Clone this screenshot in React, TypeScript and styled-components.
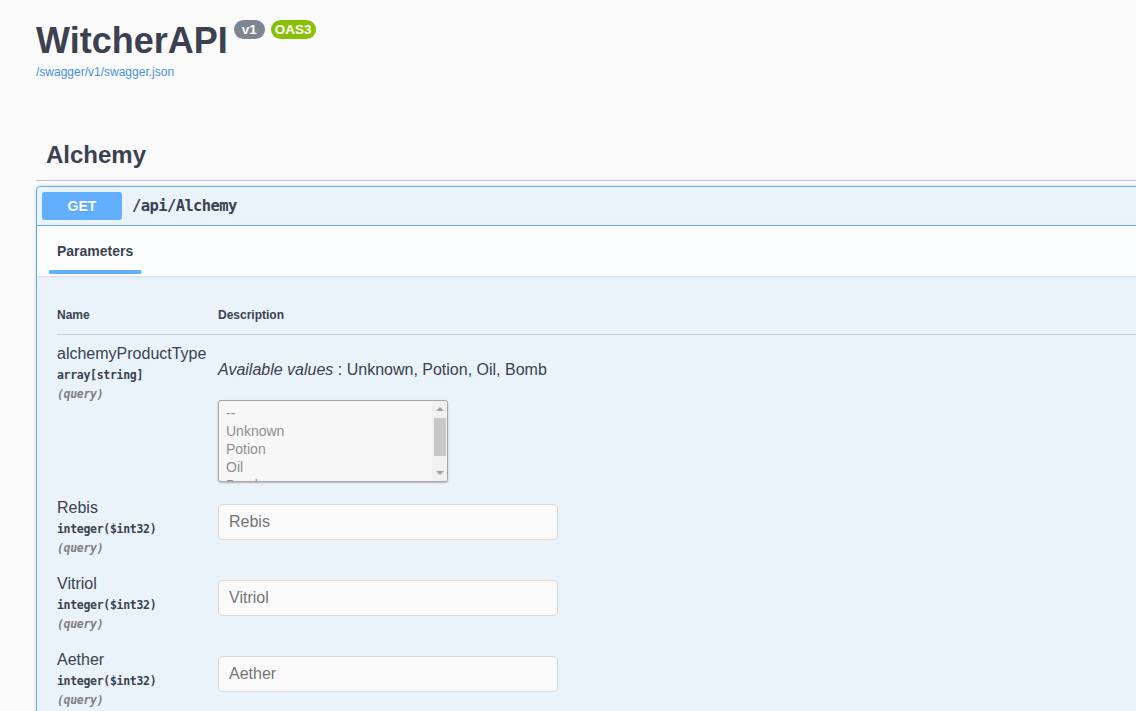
import React from 'react';
import styled, { createGlobalStyle } from 'styled-components';

const GlobalStyle = createGlobalStyle`
  html, body {
    margin: 0;
    padding: 0;
    background: #fafafa;
    overflow: hidden;
  }
  body {
    font-family: "Liberation Sans", Arial, sans-serif;
    color: #3b4151;
  }
  * {
    box-sizing: border-box;
  }
`;

const MONO = '"DejaVu Sans Mono", "Liberation Mono", monospace';

const Wrapper = styled.div`
  width: 1480px;
  padding: 0 20px 0 36px;
`;

const Info = styled.div`
  padding-top: 20px;
`;

const TitleRow = styled.div`
  display: flex;
  align-items: flex-start;
`;

const Title = styled.h2`
  margin: 0;
  font-size: 36px;
  line-height: 42px;
  font-weight: 700;
  color: #3b4151;
`;

const Badge = styled.span<{ $color: string; $pad: number }>`
  margin: 0 0 0 6px;
  height: 19px;
  padding: 0 ${({ $pad }) => $pad}px;
  border-radius: 57px;
  background: ${({ $color }) => $color};
  color: #fff;
  font-size: 13.5px;
  font-weight: 700;
  line-height: 19px;
`;

const SpecLink = styled.a`
  display: inline-block;
  margin-top: 3px;
  font-size: 12px;
  line-height: 14px;
  color: #4990e2;
  text-decoration: none;
`;

const Tag = styled.div`
  margin-top: 51px;
  padding: 10px 20px 11px 10px;
  border-bottom: 1px solid rgba(59, 65, 81, 0.3);
`;

const TagTitle = styled.h3`
  margin: 0;
  font-size: 24px;
  line-height: 28px;
  font-weight: 700;
`;

const OpBlock = styled.div`
  margin-top: 5px;
  border: 1px solid #61affe;
  border-radius: 4px;
  background: rgba(97, 175, 254, 0.1);
  box-shadow: 0 0 3px rgba(0, 0, 0, 0.19);
`;

const Summary = styled.div`
  display: flex;
  align-items: center;
  gap: 10px;
  padding: 5px;
  border-bottom: 1px solid #61affe;
`;

const Method = styled.span`
  min-width: 80px;
  padding: 6px 0;
  border-radius: 3px;
  background: #61affe;
  color: #fff;
  font-size: 14px;
  line-height: 16px;
  font-weight: 700;
  text-align: center;
  text-shadow: 0 1px 0 rgba(0, 0, 0, 0.1);
`;

const Path = styled.span`
  font-family: ${MONO};
  font-size: 15.5px;
  letter-spacing: -0.6px;
  font-weight: 700;
  color: #3b4151;
`;

const SectionHeader = styled.div`
  display: flex;
  align-items: center;
  min-height: 50px;
  padding: 8px 20px;
  background: rgba(255, 255, 255, 0.8);
  box-shadow: 0 1px 2px rgba(0, 0, 0, 0.1);
`;

const TabItem = styled.div`
  position: relative;
  font-size: 14px;
  line-height: 16px;
  font-weight: 700;

  &::after {
    content: '';
    position: absolute;
    left: 50%;
    bottom: -15px;
    width: 120%;
    height: 4px;
    transform: translateX(-50%);
    background: #61affe;
  }
`;

const TableContainer = styled.div`
  padding: 20px 20px 0;
`;

const Row = styled.div`
  display: grid;
  grid-template-columns: 161px 1fr;
`;

const HeadRow = styled(Row)`
  border-bottom: 1px solid rgba(59, 65, 81, 0.2);
`;

const HeadCell = styled.div`
  padding: 12px 0;
  font-size: 12px;
  line-height: 14px;
  font-weight: 700;
`;

const NameCell = styled.div`
  padding: 10px 10px 10px 0;
`;

const ParamName = styled.div`
  font-size: 16px;
  line-height: 18px;
`;

const ParamType = styled.div`
  padding: 5px 0;
  font-family: ${MONO};
  font-size: 11.5px;
  letter-spacing: -0.3px;
  line-height: 14px;
  font-weight: 700;
`;

const ParamIn = styled.div`
  font-family: ${MONO};
  font-size: 11.5px;
  letter-spacing: -0.3px;
  line-height: 14px;
  font-style: italic;
  font-weight: 600;
  color: #808080;
`;

const DescCell = styled.div`
  padding: 10px 10px 7px 0;
`;

const Values = styled.p`
  margin: 16px 0 0;
  font-size: 16px;
  line-height: 18px;

  i {
    font-style: italic;
  }
`;

const ListBox = styled.div`
  display: flex;
  width: 230px;
  height: 82px;
  margin-top: 21px;
  border: 1px solid #a7a7a7;
  border-radius: 3px;
  background: #f7f7f7;
  box-shadow: 0 1px 2px rgba(0, 0, 0, 0.25);
  overflow: hidden;
`;

const Options = styled.div`
  flex: 1;
  padding: 3px 0 0 7px;
`;

const Option = styled.div`
  font-size: 14px;
  line-height: 18px;
  color: #8f8f8f;
`;

const ScrollTrack = styled.div`
  display: flex;
  flex-direction: column;
  align-items: center;
  width: 15px;
  padding: 6px 0 6px;
  background: #f1f1f1;
`;

const Arrow = styled.span<{ $down?: boolean }>`
  width: 0;
  height: 0;
  border-left: 4px solid transparent;
  border-right: 4px solid transparent;
  ${({ $down }) => ($down ? 'margin-top: auto; border-top: 4px solid #a3a3a3;' : 'border-bottom: 4px solid #a3a3a3;')}
`;

const Thumb = styled.span`
  width: 12px;
  height: 38px;
  margin-top: 7px;
  background: #c8c8c8;
`;

const TextInput = styled.input`
  display: block;
  width: 340px;
  height: 36px;
  margin-top: 5px;
  padding: 8px 10px;
  border: 1px solid #d9d9d9;
  border-radius: 4px;
  background: #fafafa;
  font-family: "Liberation Sans", Arial, sans-serif;
  font-size: 16px;
  color: #3b4151;
  outline: none;

  &::placeholder {
    color: #757575;
  }
`;

const intParams = ['Rebis', 'Vitriol', 'Aether', 'Quebrith'];

export default function App() {
  return (
    <>
      <GlobalStyle />
      <Wrapper>
        <Info>
          <TitleRow>
            <Title>WitcherAPI</Title>
            <Badge $color="#7d8492" $pad={8}>v1</Badge>
            <Badge $color="#89bf04" $pad={4}>OAS3</Badge>
          </TitleRow>
          <SpecLink href="#">/swagger/v1/swagger.json</SpecLink>
        </Info>

        <Tag>
          <TagTitle>Alchemy</TagTitle>
        </Tag>

        <OpBlock>
          <Summary>
            <Method>GET</Method>
            <Path>/api/Alchemy</Path>
          </Summary>
          <SectionHeader>
            <TabItem>Parameters</TabItem>
          </SectionHeader>
          <TableContainer>
            <HeadRow>
              <HeadCell>Name</HeadCell>
              <HeadCell>Description</HeadCell>
            </HeadRow>
            <Row>
              <NameCell>
                <ParamName>alchemyProductType</ParamName>
                <ParamType>array[string]</ParamType>
                <ParamIn>(query)</ParamIn>
              </NameCell>
              <DescCell>
                <Values>
                  <i>Available values</i> : Unknown, Potion, Oil, Bomb
                </Values>
                <ListBox>
                  <Options>
                    {['--', 'Unknown', 'Potion', 'Oil', 'Bomb'].map((o) => (
                      <Option key={o}>{o}</Option>
                    ))}
                  </Options>
                  <ScrollTrack>
                    <Arrow />
                    <Thumb />
                    <Arrow $down />
                  </ScrollTrack>
                </ListBox>
              </DescCell>
            </Row>
            {intParams.map((p) => (
              <Row key={p}>
                <NameCell>
                  <ParamName>{p}</ParamName>
                  <ParamType>integer($int32)</ParamType>
                  <ParamIn>(query)</ParamIn>
                </NameCell>
                <DescCell>
                  <TextInput placeholder={p} disabled />
                </DescCell>
              </Row>
            ))}
          </TableContainer>
        </OpBlock>
      </Wrapper>
    </>
  );
}
